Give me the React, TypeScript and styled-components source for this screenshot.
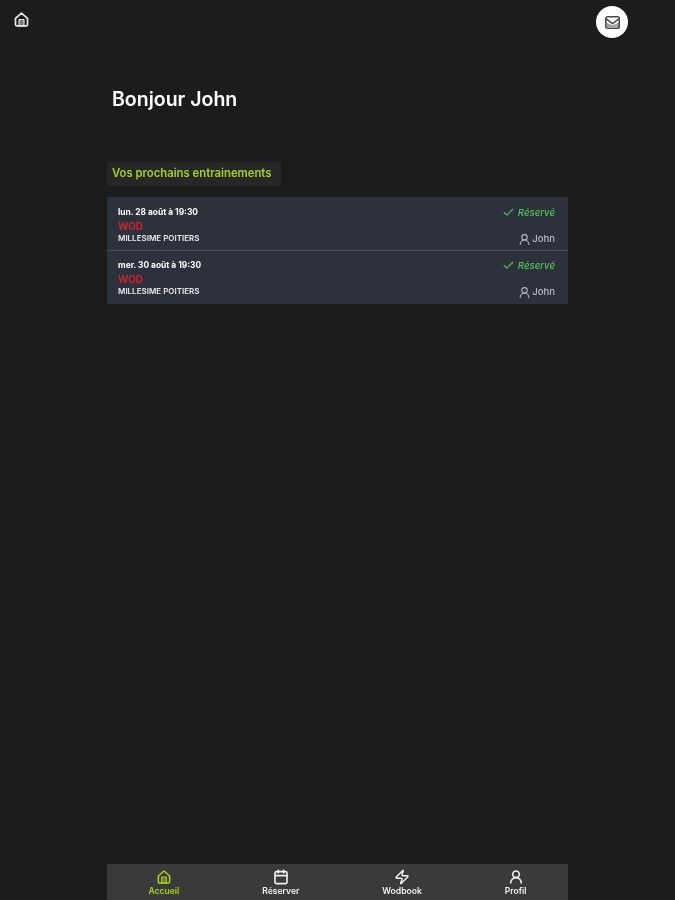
import React from 'react'
import styled, { createGlobalStyle } from 'styled-components'
import { Calendar, Check, UserRound, Zap } from 'lucide-react'

const GlobalStyle = createGlobalStyle`
  html, body {
    margin: 0;
    padding: 0;
    background: #1c1c1c;
  }

  body {
    font-family: Inter, "Liberation Sans", sans-serif;
    color: #fff;
  }
`

const Page = styled.div`
  height: 900px;
  display: flex;
  flex-direction: column;
  overflow: hidden;
  background: #1c1c1c;
  filter: blur(0.5px);
`

const TopBar = styled.header`
  height: 44px;
  padding: 6px 47px 0 12px;
  display: flex;
  align-items: flex-start;
  justify-content: space-between;
`

const HomeLink = styled.div`
  width: 18px;
  height: 26px;
  display: flex;
  align-items: center;
  justify-content: center;
  color: #e6e6e6;
`

const MailButton = styled.div`
  width: 32px;
  height: 32px;
  border-radius: 50%;
  background: #fff;
  color: #4a4a4a;
  display: flex;
  align-items: center;
  justify-content: center;
`

const Main = styled.main`
  flex: 1;
  width: 461px;
  margin-left: 107px;
  display: flex;
  flex-direction: column;
`

const Title = styled.h1`
  margin: 37px 0 0 5px;
  font-size: 19.5px;
  line-height: 24px;
  font-weight: 600;
`

const SectionLabel = styled.h2`
  align-self: flex-start;
  width: 174px;
  box-sizing: border-box;
  height: 24px;
  margin: 51px 0 0;
  padding: 0 5px;
  background: #272727;
  color: #a9d11c;
  font-size: 11.3px;
  line-height: 23px;
  font-weight: 600;
  white-space: nowrap;
`

const List = styled.section`
  margin-top: 11px;
  background: #2c313c;
  border-radius: 1px;
`

const Session = styled.article<{ $divider?: boolean }>`
  height: ${({ $divider }) => ($divider ? '54px' : '53px')};
  box-sizing: border-box;
  padding: ${({ $divider }) => ($divider ? '9px' : '8px')} 13px 0 11px;
  display: flex;
  justify-content: space-between;
  border-bottom: ${({ $divider }) => ($divider ? '1px solid #474c56' : 'none')};
`

const Details = styled.div`
  display: flex;
  flex-direction: column;
`

const When = styled.div`
  font-size: 8.4px;
  line-height: 12px;
  font-weight: 700;
`

const Kind = styled.div`
  margin-top: 2px;
  font-size: 10px;
  line-height: 13px;
  font-weight: 700;
  color: #c9252a;
`

const Place = styled.div`
  font-size: 8px;
  line-height: 11px;
  font-weight: 600;
  color: #e8e8ee;
`

const Status = styled.div`
  display: flex;
  flex-direction: column;
  align-items: flex-end;
  gap: 13px;
`

const Booked = styled.div`
  display: flex;
  align-items: center;
  gap: 3px;
  font-size: 9.6px;
  line-height: 12px;
  font-weight: 500;
  font-style: italic;
  color: #56c456;
`

const Member = styled.div`
  display: flex;
  align-items: center;
  gap: 1px;
  font-size: 9.6px;
  line-height: 14px;
  font-weight: 500;
  color: #b9bbc0;
`

const BottomNav = styled.nav`
  width: 461px;
  height: 36px;
  margin-left: 107px;
  background: #3a3a3a;
  display: flex;
  justify-content: space-around;
`

const NavItem = styled.div<{ $active?: boolean }>`
  padding-top: 4px;
  display: flex;
  flex-direction: column;
  align-items: center;
  color: ${({ $active }) => ($active ? '#a9d11c' : '#f0f0f0')};
  font-size: 8.6px;
  line-height: 10px;
  font-weight: 600;
`

const NavIcon = styled.span`
  height: 17px;
  margin-bottom: 1px;
  display: flex;
  align-items: center;
`

type IconProps = { size?: number }

const HomeIcon: React.FC<IconProps> = ({ size = 17 }) => (
  <svg width={size} height={size} viewBox="0 0 24 24" fill="none" stroke="currentColor" strokeWidth="2.4" strokeLinejoin="round">
    <path d="M3.5 10.5 12 3l8.5 7.5V19a2 2 0 0 1-2 2h-13a2 2 0 0 1-2-2z" />
    <rect x="8.5" y="12" width="7" height="9" fill="currentColor" fillOpacity="0.45" strokeWidth="1.6" />
  </svg>
)

const MailIcon: React.FC<IconProps> = ({ size = 17 }) => (
  <svg width={size} height={size} viewBox="0 0 24 24" fill="none" stroke="currentColor" strokeWidth="2.2" strokeLinejoin="round">
    <rect x="2.5" y="4" width="19" height="16" rx="2.5" />
    <path d="M3 12v6.5h18V12l-9 4z" fill="currentColor" fillOpacity="0.5" stroke="none" />
    <path d="m3 7 9 6.5L21 7" />
  </svg>
)

const sessions = [
  { when: 'lun. 28 août à 19:30' },
  { when: 'mer. 30 août à 19:30' },
]

const navItems = [
  { label: 'Accueil', icon: <HomeIcon size={16} />, active: true },
  { label: 'Réserver', icon: <Calendar size={16} strokeWidth={2.4} /> },
  { label: 'Wodbook', icon: <Zap size={16} strokeWidth={2.2} /> },
  { label: 'Profil', icon: <UserRound size={16} strokeWidth={2.4} /> },
]

const App: React.FC = () => {
  return (
    <Page>
      <GlobalStyle />
      <TopBar>
        <HomeLink>
          <HomeIcon />
        </HomeLink>
        <MailButton>
          <MailIcon />
        </MailButton>
      </TopBar>
      <Main>
        <Title>Bonjour John</Title>
        <SectionLabel>Vos prochains entrainements</SectionLabel>
        <List>
          {sessions.map((session, index) => (
            <Session key={session.when} $divider={index === 0}>
              <Details>
                <When>{session.when}</When>
                <Kind>WOD</Kind>
                <Place>MILLESIME POITIERS</Place>
              </Details>
              <Status>
                <Booked>
                  <Check size={13} strokeWidth={2} />
                  Réservé
                </Booked>
                <Member>
                  <UserRound size={13} strokeWidth={2} />
                  John
                </Member>
              </Status>
            </Session>
          ))}
        </List>
      </Main>
      <BottomNav>
        {navItems.map(({ label, icon, active }) => (
          <NavItem key={label} $active={active}>
            <NavIcon>{icon}</NavIcon>
            {label}
          </NavItem>
        ))}
      </BottomNav>
    </Page>
  )
}

export default App
